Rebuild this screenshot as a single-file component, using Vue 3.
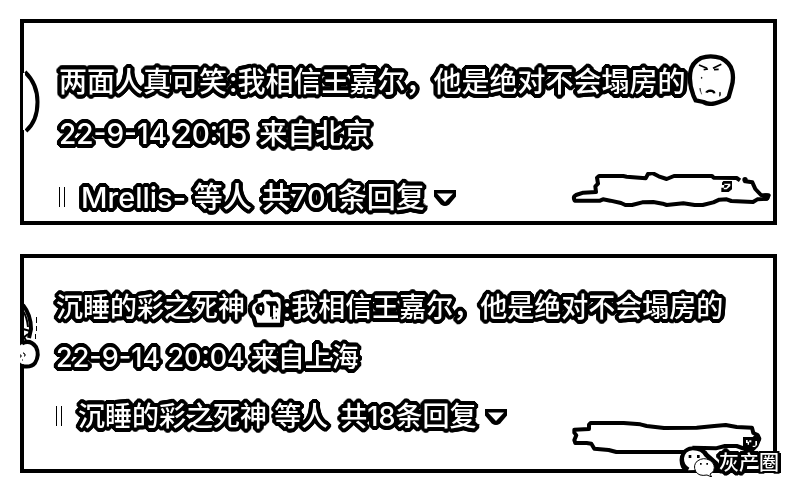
<script setup>
const posts = [
  {
    id: 1,
    size: 'large',
    user: '两面人真可笑',
    badge: false,
    face: true,
    text: '我相信王嘉尔，他是绝对不会塌房的',
    time: '22-9-14 20:15',
    place: '来自北京',
    replier: 'Mrellis-',
    count: 701,
  },
  {
    id: 2,
    size: 'small',
    user: '沉睡的彩之死神',
    badge: true,
    face: false,
    text: '我相信王嘉尔，他是绝对不会塌房的',
    time: '22-9-14 20:04',
    place: '来自上海',
    replier: '沉睡的彩之死神',
    count: 18,
  },
]
</script>

<template>
  <main class="page">
    <article v-for="post in posts" :key="post.id" class="card" :class="post.size">
      <svg v-if="post.id === 1" class="avatar" viewBox="24 60 18 80" aria-hidden="true">
        <path d="M25 72 Q37.500 84 37.500 102 Q37.500 121 26 131" fill="none" stroke="#000" stroke-width="4" />
        <path d="M24 73V130" stroke="#fff" stroke-width="2" />
      </svg>
      <svg v-else class="avatar" viewBox="24 300 18 80" aria-hidden="true">
        <path d="M23 305Q31 315 31 329L29 338" fill="none" stroke="#000" stroke-width="4" />
        <path d="M23 311Q27 317 28 327M23 329L30 331M22 339L28 334M22 334L27 342" fill="none" stroke="#000" stroke-width="2" />
        <path d="M36.500 317V323M36.500 326V331M35.500 334V339" stroke="#000" stroke-width="1" />
        <circle cx="27" cy="354" r="11" fill="#fff" />
        <path d="M22 343.500Q30 339 36 347Q40 355 35 363Q31 368 22 366" fill="none" stroke="#000" stroke-width="4" />
        <path d="M22 344Q19 354 22 364V344" fill="#fff" />
        <path d="M23 353h1v1h1v2h-1M20 355h1v2h-1M22 360h1" fill="none" stroke="#000" stroke-width="1" />
      </svg>

      <div class="body">
        <p class="line">
          <a class="user" href="#">{{ post.user }}</a>
          <svg v-if="post.badge" class="badge" viewBox="56 26 120 117" aria-hidden="true">
            <path d="M82 48L100 45L106 35H126L131 44L148 42L162 52L164 78L161 134H82L76 112Q63 101 65 82Q66 67 82 61Z" fill="#fff" stroke="#000" stroke-width="13" stroke-linejoin="round" />
            <path fill-rule="evenodd" d="M87 70L103 65L108 75V96L99 106L84 99L80 83ZM94 79V89L101 92V80Z" />
            <path d="M113 63H143L150 73V84H142V76H134V109H125V77L115 70Z" />
            <path d="M142 91h4v5h-4zM130 110h5v7h-5zM142 109h4v6h-4z" />
          </svg>
          <span class="comment">:{{ post.text }}</span>
          <svg v-if="post.face" class="face" viewBox="27 24 144 156" aria-hidden="true">
            <path d="M66 36Q94 26 126 36Q155 51 160 76Q165 101 157 125L149 153L140 161L119 169Q94 179 73 168L50 163L43 148Q29 112 34 79Q38 50 66 36Z" fill="#fff" stroke="#000" stroke-width="13" />
            <path d="M60 57L84 67M74 71L87 69M127 55L102 67M105 71L119 70" fill="none" stroke="#000" stroke-width="5" />
            <path d="M82 140Q84 135 94 134Q105 134 106 142" fill="none" stroke="#000" stroke-width="7" />
            <path d="M67 94h2v3h-2zM62 127L68 145M64 126V136M122 139h2v8l-2 4z" fill="#000" stroke="#000" stroke-width="2" />
          </svg>
        </p>
        <p class="line meta">
          <time>{{ post.time }}</time>
          <span>{{ post.place }}</span>
        </p>
        <div class="footer">
          <span class="bars"></span>
          <a class="replier" href="#">{{ post.replier }} 等人</a>
          <button class="more" type="button">
            <span>共{{ post.count }}条回复</span>
            <svg class="caret" viewBox="0 0 24 18" aria-hidden="true">
              <path d="M2.500 2.500H21.500V7L15 14.500Q12 16.500 9 14.500L2.500 7Z" fill="#000" stroke="#000" stroke-width="3" />
              <path d="M4 4.500H20L12 13Z" fill="#fff" />
            </svg>
          </button>
          <svg v-if="post.id === 1" class="scribble" viewBox="30 33 609 114" aria-hidden="true">
            <path d="M540 58L530 51L461 50L456 45H342L320 54L296 46L277 36L264 39L257 52L200 47L190 45H117L111 50L114 68L106 76L108 93L70 95L48 102Q38 107 44 119H120L129 115L151 119L183 126L196 132H216L247 124L280 123L308 128L320 132L370 127L404 132H428L460 124L478 116L500 115L514 120L579 123L592 115L621 113L626 103L603 102L586 84L577 64L551 60" fill="none" stroke="#000" stroke-width="12" stroke-linejoin="round" />
            <circle cx="618" cy="108" r="11" />
            <circle cx="555" cy="56" r="8" />
            <path d="M490 60H516V85L506 93H484V80H499L505 72H486V65ZM494 65V68H511V75L500 85H491" fill-rule="evenodd" />
          </svg>
          <svg v-else class="scribble" viewBox="30 24 609 114" aria-hidden="true">
            <path d="M374 126H169L146 120L103 116L94 101L80 99H46L43 90L49 76L43 68V59L87 57V44L92 39H191L241 43L260 48L312 54L410 53L463 48L497 45L530 51L576 53L580 69L593 75L598 86L590 106L579 117H555L530 108H495L467 115L397 113" fill="none" stroke="#000" stroke-width="12" stroke-linejoin="round" />
            <path d="M549 81H578L585 74L602 90L592 111L577 122L562 112H549Z" />
            <path d="M558 90h5v5h5v-4h6v6h-7v7h-4v-5h-5zM586 93h5v12l-6 6h-7v-4h8z" fill="#fff" />
          </svg>
        </div>
      </div>

      <div v-if="post.id === 2" class="watermark">
        <svg class="chat" viewBox="354 105 120 96" aria-hidden="true">
          <path d="M377 185L366 171Q356 145 369 128Q380 111 400 113Q432 114 442 132L474 160V185Z" fill="#000" stroke="#000" stroke-width="6" />
          <path d="M384 181L388 173Q371 164 372 145Q375 123 398 121Q425 121 433 139L442 147L410 180Z" fill="#fff" />
          <path d="M386 135h8v9h-8zM411 135h8v9h-8z" />
          <path d="M455 201L441 195Q416 200 407 184Q398 166 412 153Q431 140 450 151Q468 164 461 182Q458 188 450 192Z" fill="#fff" stroke="#000" stroke-width="3" />
          <path d="M420 159h5v5h-5zM439 159h5v5h-5z" />
        </svg>
        <span class="mark">灰产</span><span class="mark thin">圈</span>
      </div>
    </article>
  </main>
</template>

<style>
body {
  margin: 0;
  background: #fff;
}
</style>

<style scoped>
.page {
  display: flex;
  flex-direction: column;
  gap: 29px;
  padding: 19px 29px 26px 20px;
  font-family: Inter, "Noto Sans CJK SC", sans-serif;
  font-weight: 500;
  color: #fff;
}

.card {
  position: relative;
  display: flex;
  border: 4px solid #000;
  background: #fff;
  white-space: nowrap;
}

.large {
  font-size: 28px;
  line-height: 52px;
}

.small {
  font-size: 27px;
  line-height: 50px;
}

.avatar {
  flex: none;
  width: 18px;
  height: 80px;
  margin-top: 37px;
  overflow: visible;
}

.small .avatar {
  margin-top: 42px;
}

.body {
  flex: 1;
  min-width: 0;
  padding: 33px 0 0 17px;
  will-change: transform;
}

.small .body {
  padding: 25px 0 13px 14px;
}

.line {
  display: flex;
  align-items: center;
  margin: 0;
}

.meta {
  gap: 6px;
}

.large .meta {
  gap: 12px;
}

.user,
.comment,
.meta time,
.meta span,
.replier,
.more span,
.mark {
  color: #fff;
  text-decoration: none;
  -webkit-text-stroke: 4px #000;
  paint-order: stroke fill;
  text-shadow:
    4px 0 #000, 4px 1px #000, 3px 2px #000, 2px 3px #000, 1px 4px #000, 0 4px #000,
    -1px 4px #000, -2px 3px #000, -3px 2px #000, -4px 1px #000, -4px 0 #000,
    -4px -1px #000, -3px -2px #000, -2px -3px #000, -1px -4px #000, 0 -4px #000,
    1px -4px #000, 2px -3px #000, 3px -2px #000, 4px -1px #000,
    2px 2px #000, -2px 2px #000, 2px -2px #000, -2px -2px #000;
}

.large .comment {
  margin-left: 2px;
}

.badge {
  flex: none;
  width: 40px;
  height: 39px;
  margin: 0 -4px 0 2px;
  z-index: 1;
}

.small .comment {
  position: relative;
  margin-right: 2px;
}

.face {
  flex: none;
  width: 48px;
  height: 52px;
  margin: -4px 0 0 2px;
  z-index: 1;
}

.footer {
  display: flex;
  align-items: flex-start;
  margin-top: 15px;
  line-height: 46px;
}

.large .footer {
  font-size: 29px;
}

.small .footer {
  margin-top: 11px;
}

.bars {
  width: 4px;
  height: 20px;
  margin: 12px 16px 0 0;
  border: solid #000;
  border-width: 0 1px;
}

.more {
  display: flex;
  align-items: center;
  gap: 8px;
  margin-left: 12px;
  padding: 0;
  border: 0;
  background: none;
  font: inherit;
  line-height: inherit;
}

.large .more {
  margin-left: 10px;
}

.caret {
  width: 24px;
  height: 18px;
}

.scribble {
  flex: none;
  width: 203px;
  height: 38px;
  margin: -3px 0 0 auto;
}

.small .scribble {
  margin-top: 24px;
}

.watermark {
  position: absolute;
  right: -8px;
  bottom: -12px;
  display: flex;
  align-items: flex-start;
  font-size: 20px;
  line-height: 36px;
  z-index: 2;
  will-change: transform;
}

.chat {
  position: relative;
  width: 40px;
  height: 32px;
  margin-right: 1px;
  z-index: 1;
}

.mark.thin {
  align-self: center;
  line-height: 20px;
  text-shadow: none;
  border-right: 2px solid #000;
}
</style>
